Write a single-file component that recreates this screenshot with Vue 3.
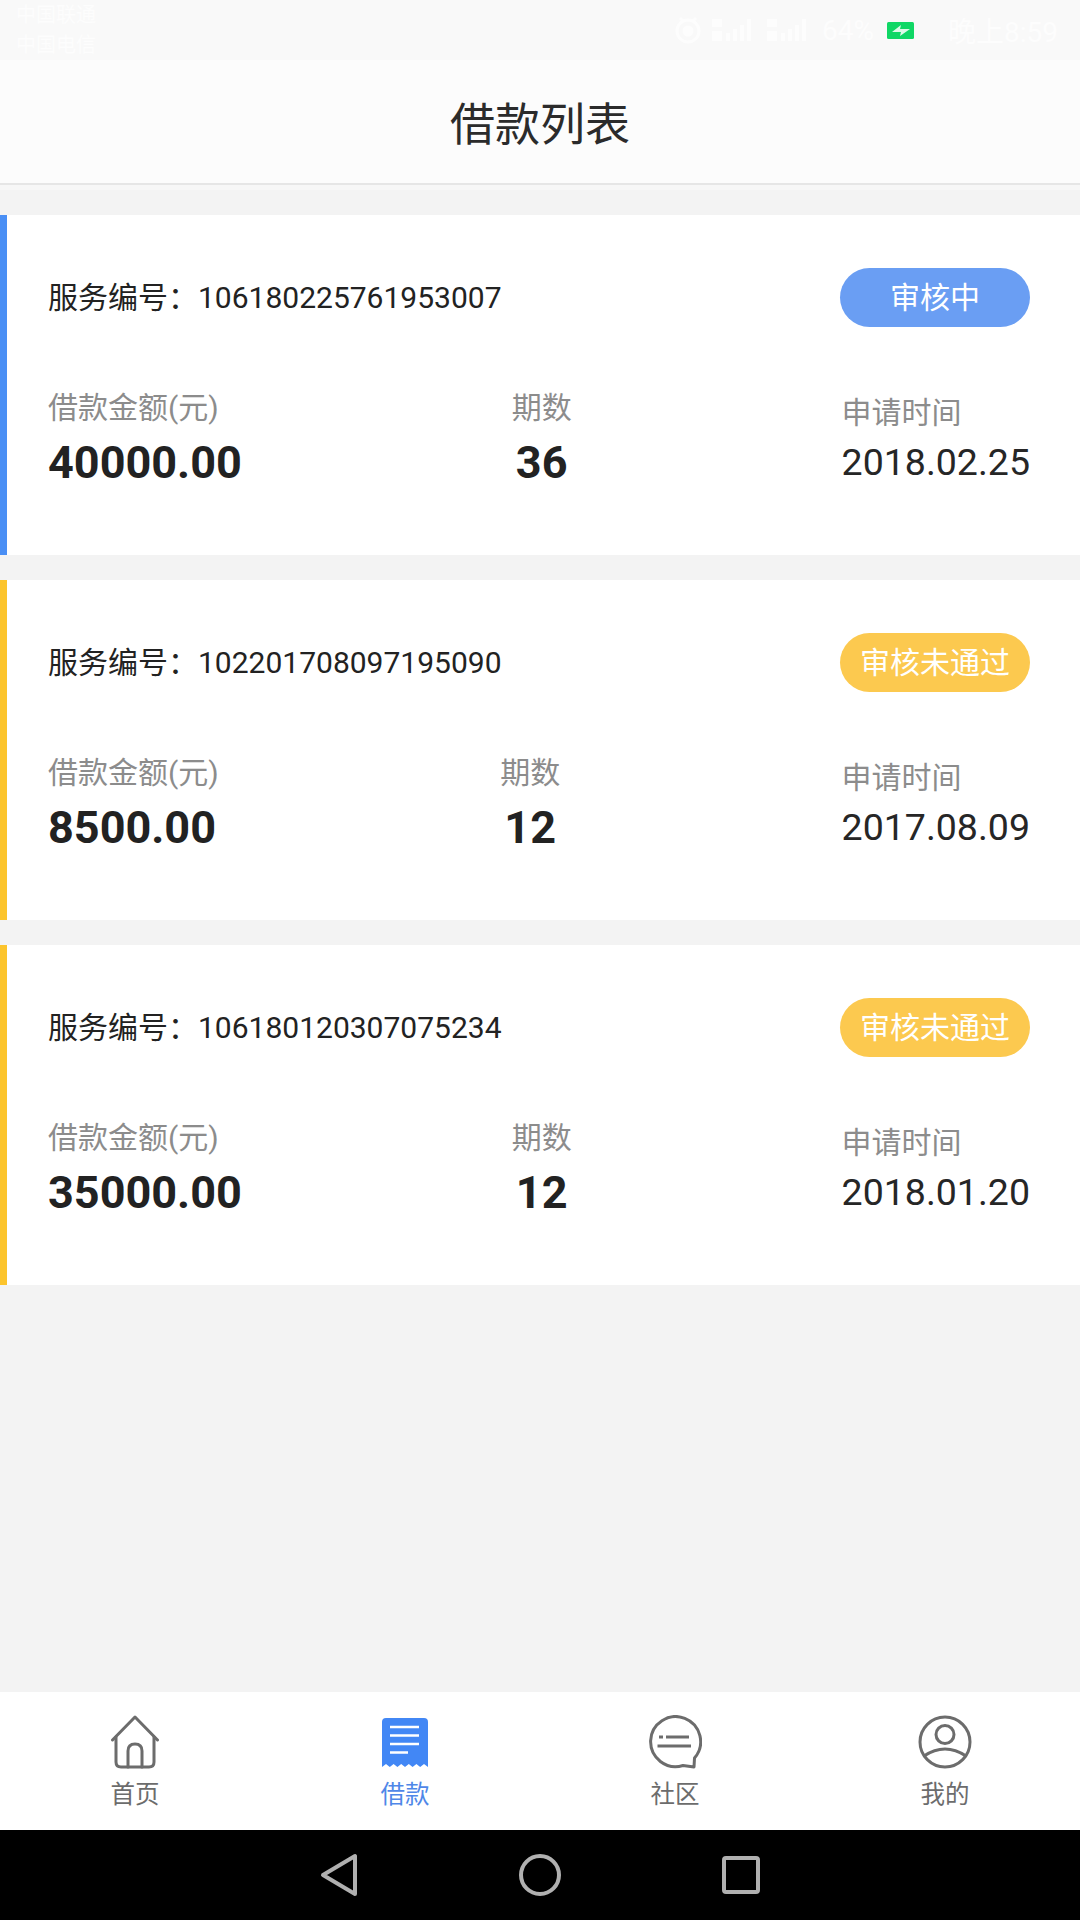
<script setup>
const loans = [
  { no: '106180225761953007', amount: '40000.00', term: '36', date: '2018.02.25', status: '审核中', tone: 'blue' },
  { no: '102201708097195090', amount: '8500.00', term: '12', date: '2017.08.09', status: '审核未通过', tone: 'yellow' },
  { no: '106180120307075234', amount: '35000.00', term: '12', date: '2018.01.20', status: '审核未通过', tone: 'yellow' }
]
</script>

<template>
  <div class="screen">
    <div class="status">
      <div class="carriers"><span>中国联通</span><span>中国电信</span></div>
      <div class="sys">
        <svg width="28" height="28" viewBox="0 0 28 28" fill="none" stroke="#fdfdfd" stroke-width="3"><circle cx="14" cy="15" r="11"/><circle cx="14" cy="15" r="4" fill="#fdfdfd"/><path d="M6 2 L10 6 M22 2 L18 6"/></svg>
        <svg class="sig" width="45" height="26" viewBox="0 0 45 26" fill="#fdfdfd"><rect x="0" y="2" width="10" height="8"/><rect x="0" y="14" width="10" height="10"/><rect x="14" y="16" width="4" height="8"/><rect x="21" y="12" width="4" height="12"/><rect x="28" y="8" width="4" height="16"/><rect x="35" y="2" width="4" height="22"/></svg>
        <svg class="sig" width="45" height="26" viewBox="0 0 45 26" fill="#fdfdfd"><rect x="0" y="2" width="10" height="8"/><rect x="0" y="14" width="10" height="10"/><rect x="14" y="16" width="4" height="8"/><rect x="21" y="12" width="4" height="12"/><rect x="28" y="8" width="4" height="16"/><rect x="35" y="2" width="4" height="22"/></svg>
        <span class="pct">64%</span>
        <svg class="batt" width="27" height="17" viewBox="0 0 27 17"><rect width="27" height="17" rx="1.500" fill="#10d765"/><path d="M5 10 L14 3 L13 7 L23 7 L13 14 L14 10 Z" fill="#dff8e8"/></svg>
        <span class="clock">晚上8:59</span>
      </div>
    </div>
    <header class="head">借款列表</header>
    <main class="list">
      <section v-for="l in loans" :key="l.no" class="card" :class="l.tone">
        <div class="top">
          <div class="no">服务编号：{{ l.no }}</div>
          <div class="badge">{{ l.status }}</div>
        </div>
        <div class="cols">
          <div class="col">
            <div class="label">借款金额(元)</div>
            <div class="big">{{ l.amount }}</div>
          </div>
          <div class="col mid">
            <div class="label">期数</div>
            <div class="big">{{ l.term }}</div>
          </div>
          <div class="col last">
            <div class="label">申请时间</div>
            <div class="date">{{ l.date }}</div>
          </div>
        </div>
      </section>
    </main>
    <nav class="tabs">
      <div class="tab">
        <svg width="54" height="54" viewBox="0 0 54 54" fill="none" stroke="#6c6c6c" stroke-width="3" stroke-linejoin="round" stroke-linecap="round">
          <path d="M4.500 25 L27 2 L49.500 25"/>
          <path d="M8 22 V47 Q8 52 13 52 H41 Q46 52 46 47 V22"/>
          <path d="M20 52 V36 Q20 29 27 29 Q34 29 34 36 V52"/>
        </svg>
        <span>首页</span>
      </div>
      <div class="tab active">
        <svg width="54" height="54" viewBox="0 0 54 54">
          <path d="M4 7 Q4 3 8 3 H46 Q50 3 50 7 V52 L46 49 L42.200 52 L38.400 49 L34.600 52 L30.800 49 L27 52 L23.200 49 L19.400 52 L15.600 49 L11.800 52 L8 49 L4 52 Z" fill="#4287f5"/>
          <path d="M12 12 H41 M12 20.500 H41 M12 29 H41 M12 37.500 H30" stroke="#fff" stroke-width="2.600" fill="none"/>
        </svg>
        <span>借款</span>
      </div>
      <div class="tab comm">
        <svg width="54" height="54" viewBox="0 0 54 54" fill="none" stroke="#6c6c6c" stroke-width="3" stroke-linejoin="round">
          <path d="M35 50.500 A25 25 0 1 1 46.500 43 L46 52 Z"/>
          <path d="M11 22 H15 M18 22 H41 M9.500 31 H43" stroke-width="3"/>
        </svg>
        <span>社区</span>
      </div>
      <div class="tab">
        <svg width="54" height="54" viewBox="0 0 54 54" fill="none" stroke="#6c6c6c" stroke-width="3">
          <circle cx="27" cy="27" r="25"/>
          <circle cx="27" cy="19.500" r="9"/>
          <path d="M6 41 Q27 27 48 41"/>
        </svg>
        <span>我的</span>
      </div>
    </nav>
    <div class="sysnav">
      <svg width="38" height="44" viewBox="0 0 38 44" fill="none" stroke="#b0b0b0" stroke-width="4" stroke-linejoin="round"><path d="M35 3 V41 L3 22 Z"/></svg>
      <svg width="42" height="42" viewBox="0 0 42 42" fill="none" stroke="#b0b0b0" stroke-width="4"><circle cx="21" cy="21" r="19"/></svg>
      <svg width="38" height="38" viewBox="0 0 38 38" fill="none" stroke="#b0b0b0" stroke-width="4" stroke-linejoin="round"><rect x="2" y="2" width="34" height="34" rx="2"/></svg>
    </div>
  </div>
</template>

<style>
body { margin: 0; }
</style>

<style scoped>
.screen {
  width: 1080px;
  height: 1920px;
  display: flex;
  flex-direction: column;
  background: #f3f3f3;
  font-family: Roboto, "Noto Sans CJK SC", sans-serif;
  overflow: hidden;
}
.status {
  height: 60px;
  background: #f9f9f9;
  display: flex;
  justify-content: space-between;
  align-items: center;
  padding: 0 22px 0 16px;
  color: #fdfdfd;
  flex: none;
  box-sizing: border-box;
}
.carriers {
  display: flex;
  flex-direction: column;
  font-size: 20px;
  line-height: 30px;
}
.sys {
  display: flex;
  align-items: center;
  gap: 10px;
  font-size: 28px;
}
.batt { margin-left: 3px; }
.clock { margin-left: 24px; }
.head {
  flex: none;
  height: 115px;
  padding-top: 8px;
  background: #fcfcfc;
  border-bottom: 2px solid #e6e6e6;
  color: #2b2b2b;
  font-size: 45px;
  line-height: 115px;
  text-align: center;
}
.list {
  flex: 1;
  display: flex;
  flex-direction: column;
  gap: 25px;
  padding-top: 25px;
  border-top: 5px solid #f7f7f7;
}
.card {
  height: 340px;
  box-sizing: border-box;
  background: #fff;
  border-left: 7px solid #4a8ff5;
  padding: 53px 50px 0 41px;
}
.card.yellow { border-left-color: #fcc42c; }
.top {
  display: flex;
  justify-content: space-between;
  align-items: center;
  height: 59px;
}
.no {
  font-size: 30px;
  color: #222;
  padding-bottom: 5px;
}
.badge {
  width: 190px;
  height: 59px;
  border-radius: 30px;
  background: #6a9ef3;
  color: #fff;
  font-size: 30px;
  line-height: 59px;
  text-align: center;
}
.yellow .badge { background: #fcc94f; }
.cols {
  display: flex;
  justify-content: space-between;
  margin-top: 61px;
}
.col { display: flex; flex-direction: column; }
.mid { align-items: center; }
.label {
  font-size: 30px;
  line-height: 40px;
  color: #8c8c8c;
}
.big {
  font-size: 45px;
  font-weight: 700;
  line-height: 56px;
  margin-top: 7px;
  color: #222;
}
.last .label { margin-top: 5px; }
.date {
  font-size: 37.500px;
  line-height: 48px;
  margin-top: 5px;
  color: #262626;
}
.tabs {
  flex: none;
  height: 138px;
  background: #fff;
  display: grid;
  grid-template-columns: repeat(4, 270px);
}
.tab {
  display: flex;
  flex-direction: column;
  align-items: center;
  padding-top: 23px;
  color: #6c6c6c;
  font-size: 24.500px;
  line-height: 30px;
  box-sizing: border-box;
}
.tab svg { margin-bottom: 11px; }
.tab.comm svg { margin-right: 1px; }
.tab.active { color: #4f87e8; }
.sysnav {
  flex: none;
  height: 90px;
  background: #000;
  display: flex;
  align-items: center;
  justify-content: center;
  gap: 161px;
}
</style>
